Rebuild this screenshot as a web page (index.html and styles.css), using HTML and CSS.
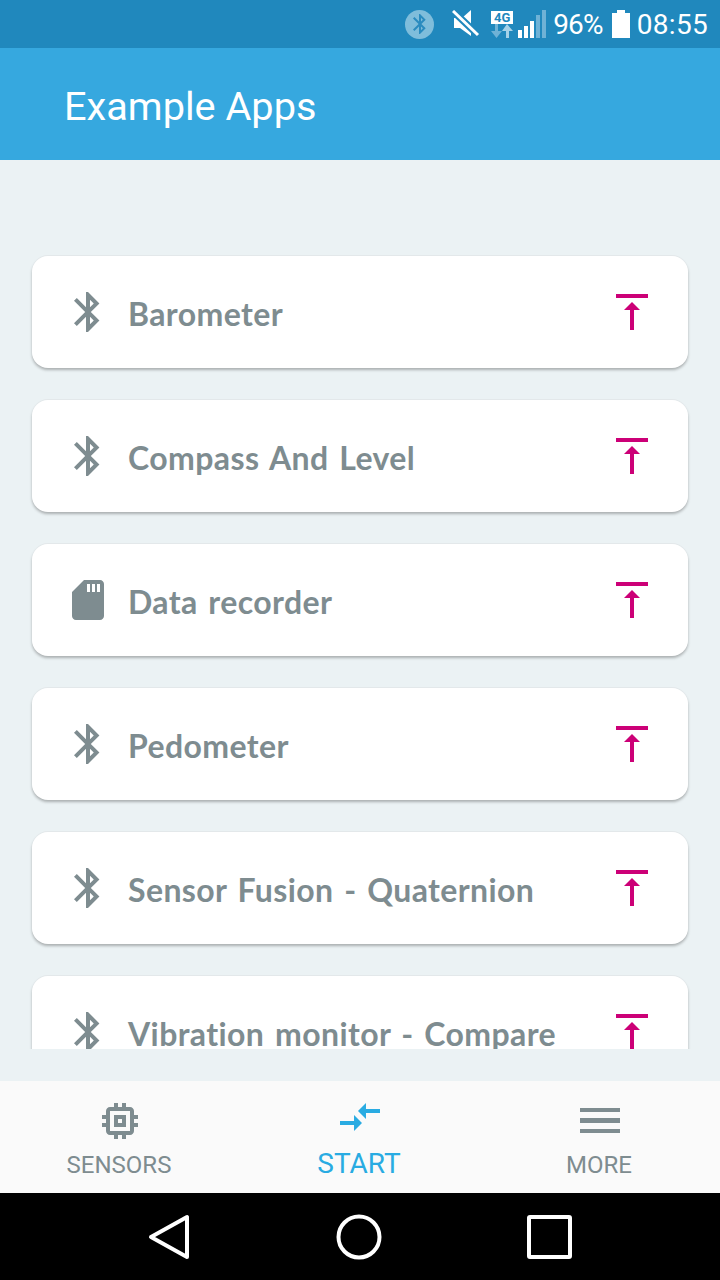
FILE: index.html
```html
<!DOCTYPE html>
<html lang="en">
<head>
  <meta charset="UTF-8" />
  <meta name="viewport" content="width=device-width, initial-scale=1.0"/>
  <title>Example Apps</title>
  <link rel="stylesheet" href="styles.css">
</head>
<body>
  <svg class="defs" width="0" height="0">
    <symbol id="bt" viewBox="0 0 24 24"><path d="M17.71 7.71L12 2h-1v7.59L6.41 5 5 6.41 10.59 12 5 17.59 6.41 19 11 14.41V22h1l5.71-5.71-4.3-4.29 4.3-4.29zM13 5.83l1.88 1.88L13 9.59V5.83zm1.88 10.46L13 18.17v-3.76l1.88 1.88z"/></symbol>
    <symbol id="sd" viewBox="0 0 24 24"><path fill-rule="evenodd" d="M18 2h-8L4 8v12c0 1.1.9 2 2 2h12c1.1 0 2-.9 2-2V4c0-1.1-.9-2-2-2zM11.5 4H13v4h-1.5zM14 4h1.5v4H14zM16.500 4H18v4h-1.500z"/></symbol>
    <symbol id="upload" viewBox="0 0 48 48"><path d="M8 6h32v4H8zM24 14l8 8h-6v20h-4V22h-6z"/></symbol>
  </svg>

  <div class="status-bar">
    <span class="bt-badge"><svg width="24" height="24"><use href="#bt"/></svg></span>
    <svg class="mute" width="28" height="28" viewBox="0 0 28 28">
      <path d="M19 0L10 8H2v10h6l11 8z" fill="#fff"/>
      <path d="M1 1l25 24" stroke="#2088bd" stroke-width="7"/>
      <path d="M1 1l25 24" stroke="#fff" stroke-width="3"/>
    </svg>
    <span class="net">
      <span class="net-tag">4G</span>
      <svg width="22" height="14" viewBox="0 0 22 14">
        <path d="M4 0h3v7h4l-5.500 7L0 7h4z" fill="#6fb2d6"/>
        <path d="M16 0l6 7h-4v7h-3V7h-4z" fill="#a5d2e8"/>
      </svg>
    </span>
    <svg class="signal" width="28" height="28" viewBox="0 0 28 28">
      <path d="M0 20h4v8H0zM6 16h4v12H6zM12 11h4v17h-4z" fill="#fff"/>
      <path d="M18 5h4v23h-4zM24 0h4v28h-4z" fill="#6fb2d6"/>
    </svg>
    <span class="status-text pct">96%</span>
    <svg class="battery" width="18" height="28" viewBox="0 0 18 28"><path d="M5 0h8v3h5v25H0V3h5z" fill="#fff"/></svg>
    <span class="status-text">08:55</span>
  </div>

  <header class="app-bar">Example Apps</header>

  <main class="content">
    <div class="app-list">
      <div class="app-card">
        <svg class="app-icon"><use href="#bt"/></svg>
        <span class="app-name">Barometer</span>
        <svg class="upload-icon"><use href="#upload"/></svg>
      </div>
      <div class="app-card">
        <svg class="app-icon"><use href="#bt"/></svg>
        <span class="app-name">Compass And Level</span>
        <svg class="upload-icon"><use href="#upload"/></svg>
      </div>
      <div class="app-card">
        <svg class="app-icon"><use href="#sd"/></svg>
        <span class="app-name">Data recorder</span>
        <svg class="upload-icon"><use href="#upload"/></svg>
      </div>
      <div class="app-card">
        <svg class="app-icon"><use href="#bt"/></svg>
        <span class="app-name">Pedometer</span>
        <svg class="upload-icon"><use href="#upload"/></svg>
      </div>
      <div class="app-card">
        <svg class="app-icon"><use href="#bt"/></svg>
        <span class="app-name">Sensor Fusion - Quaternion</span>
        <svg class="upload-icon"><use href="#upload"/></svg>
      </div>
      <div class="app-card">
        <svg class="app-icon"><use href="#bt"/></svg>
        <span class="app-name">Vibration monitor - Compare</span>
        <svg class="upload-icon"><use href="#upload"/></svg>
      </div>
    </div>
  </main>

  <nav class="tabs">
    <div class="tab">
      <svg class="tab-icon" viewBox="0 0 24 24"><path d="M15 9H9v6h6V9zm-2 4h-2v-2h2v2zm8-2V9h-2V7c0-1.100-.9-2-2-2h-2V3h-2v2h-2V3H9v2H7c-1.100 0-2 .9-2 2v2H3v2h2v2H3v2h2v2c0 1.100.9 2 2 2h2v2h2v-2h2v2h2v-2h2c1.100 0 2-.9 2-2v-2h2v-2h-2v-2h2zm-4 6H7V7h10v10z"/></svg>
      <span class="tab-label">SENSORS</span>
    </div>
    <div class="tab active">
      <svg class="tab-icon" viewBox="0 0 24 24"><path d="M9.010 14H2v2h7.010v3L13 15l-3.990-4v3zm5.980-1v-3H22V8h-7.010V5L11 9l3.990 4z"/></svg>
      <span class="tab-label">START</span>
    </div>
    <div class="tab">
      <svg class="tab-icon" viewBox="0 0 48 48"><path d="M4 11h40v4H4zM4 21h40v5H4zM4 32h40v4H4z"/></svg>
      <span class="tab-label">MORE</span>
    </div>
  </nav>

  <div class="nav-bar">
    <svg class="nav-icon" viewBox="0 0 48 48"><path d="M42 4v40L6 24z"/></svg>
    <svg class="nav-icon" viewBox="0 0 48 48"><circle cx="24" cy="24" r="20.500"/></svg>
    <svg class="nav-icon" viewBox="0 0 48 48"><rect x="4" y="4" width="41" height="40" rx="1"/></svg>
  </div>
</body>
</html>
```

FILE: styles.css
```css
* {
  box-sizing: border-box;
}

html, body {
  height: 100%;
}

body {
  margin: 0;
  height: 1280px;
  display: flex;
  flex-direction: column;
  overflow: hidden;
  background-color: #ebf2f4;
  font-family: Roboto, sans-serif;
}

.defs {
  display: none;
}

.status-bar {
  flex: 0 0 48px;
  display: flex;
  align-items: center;
  justify-content: flex-end;
  padding-right: 12px;
  background-color: #2088bd;
  color: #fff;
}

.bt-badge {
  width: 29px;
  height: 29px;
  margin-right: 18px;
  border-radius: 50%;
  background-color: #7fbddb;
  display: flex;
  align-items: center;
  justify-content: center;
  fill: #2a8bbf;
}

.mute {
  margin-right: 10px;
}

.net {
  display: flex;
  flex-direction: column;
  align-items: center;
  width: 24px;
  margin-right: 4px;
}

.net-tag {
  width: 22px;
  height: 13px;
  background-color: #fff;
  color: #2088bd;
  font-size: 13px;
  font-weight: 700;
  line-height: 13px;
  text-align: center;
}

.signal {
  margin-right: 7px;
}

.status-text {
  font-size: 28px;
  letter-spacing: 0.3px;
}

.pct {
  letter-spacing: -0.8px;
}

.battery {
  margin: 0 7px 0 9px;
}

.app-bar {
  flex: 0 0 112px;
  display: flex;
  align-items: center;
  padding: 4px 0 0 64px;
  background-color: #36a8df;
  color: #fff;
  font-size: 39.7px;
}

.content {
  flex: 1;
  min-height: 0;
  padding-bottom: 32px;
  display: flex;
}

.app-list {
  flex: 1;
  display: flex;
  flex-direction: column;
  gap: 32px;
  padding: 96px 32px 0;
  overflow: hidden;
}

.app-card {
  flex: 0 0 112px;
  display: flex;
  align-items: center;
  gap: 16px;
  padding: 0 32px;
  background-color: #fff;
  border-radius: 16px;
  box-shadow: 0 -1px 0 #e3e8ea, 0 2px 3px rgba(0, 0, 0, 0.28);
}

.app-icon {
  flex: none;
  width: 48px;
  height: 48px;
  fill: #7e8c90;
}

.app-name {
  flex: 1;
  padding-top: 2px;
  color: #7e8c90;
  font-family: Lato, sans-serif;
  font-size: 32px;
  font-weight: 700;
  letter-spacing: 0.4px;
  word-spacing: 2.5px;
}

.upload-icon {
  flex: none;
  width: 48px;
  height: 48px;
  fill: #cc0077;
}

.tabs {
  flex: 0 0 112px;
  display: flex;
  background-color: #fafafa;
}

.tab {
  flex: 1;
  display: flex;
  flex-direction: column;
  align-items: center;
  padding-top: 16px;
  color: #7e8c90;
  fill: #7e8c90;
}

.tab.active {
  padding-top: 12px;
  color: #29abe2;
  fill: #29abe2;
}

.tab-icon {
  width: 48px;
  height: 48px;
}

.tab-label {
  margin: 4px 2px 0 0;
  font-size: 24px;
  line-height: 32px;
}

.active .tab-label {
  margin-top: 5px;
  font-size: 28px;
  line-height: 36px;
}

.nav-bar {
  flex: 0 0 87px;
  display: flex;
  align-items: center;
  justify-content: center;
  gap: 142px;
  padding-right: 2px;
  background-color: #000;
}

.nav-icon {
  width: 48px;
  height: 48px;
  fill: none;
  stroke: #fff;
  stroke-width: 4;
  stroke-linejoin: round;
}
```
